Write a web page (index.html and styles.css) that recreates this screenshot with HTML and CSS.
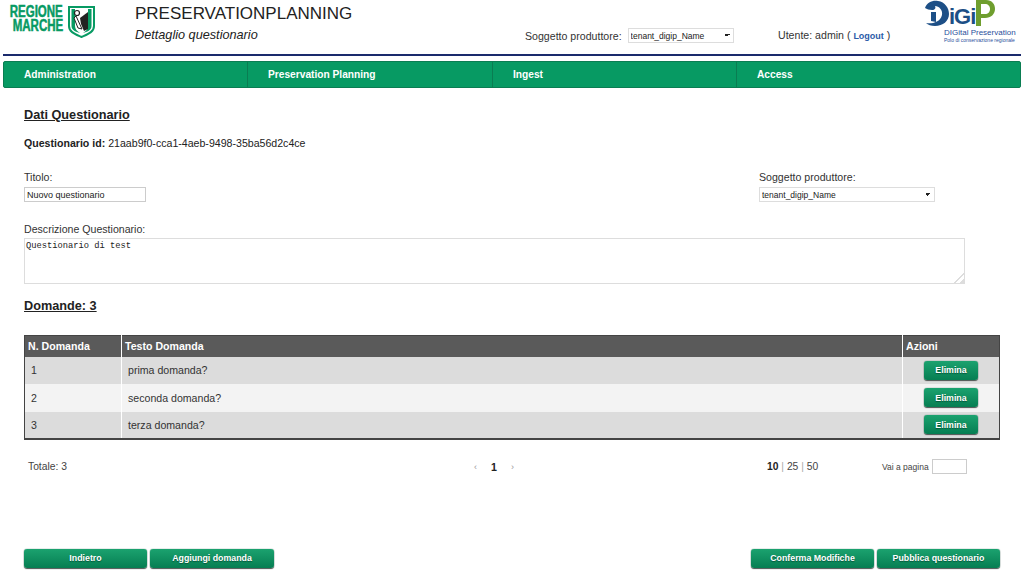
FILE: index.html
```html
<!DOCTYPE html>
<html lang="it">
<head>
<meta charset="utf-8">
<title>Dettaglio questionario</title>
<link rel="stylesheet" href="styles.css">
</head>
<body>
<header class="header">
  <div class="logo-rm">
    <div class="logo-rm-text"><span class="logo-line">REGIONE</span><span class="logo-line">MARCHE</span></div>
    <svg class="logo-rm-shield" width="27" height="32" viewBox="0 0 27 32">
      <path d="M1 1H26V20C26 26 20 28 13.500 31C7 28 1 26 1 20Z" fill="#fff" stroke="#079a63" stroke-width="2"/>
      <path d="M3.500 3H7V20C7 23 9 25 12 27C8 26 3.500 24 3.500 20Z" fill="#079a63"/>
      <path d="M23.500 3H20V20C20 23 18 25 15 27C19 26 23.500 24 23.500 20Z" fill="#079a63"/>
      <path d="M12 12L20 6V23L16 25L13 18Z" fill="#222"/>
      <circle cx="9" cy="7" r="2.500" fill="none" stroke="#222" stroke-width="1.200"/>
      <path d="M8 10L14 23L10 22L6 12Z" fill="#fff" stroke="#222"/>
    </svg>
  </div>
  <div class="app-title">
    <div class="app-name">PRESERVATIONPLANNING</div>
    <div class="app-sub">Dettaglio questionario</div>
  </div>
  <div class="tenant">
    <label class="top-label">Soggetto produttore:</label>
    <select class="select select-top"><option>tenant_digip_Name</option></select>
  </div>
  <div class="user top-label">Utente: admin ( <a class="logout" href="#">Logout</a> )</div>
  <div class="logo-digip">
    <div class="digip-mark">
      <svg class="digip-swirl" width="24" height="27" viewBox="0 0 24 27">
        <path d="M0 8C2 2 8 0 13 1C20 2 24 8 24 14C24 21 18 26 10 26C6 26 3 25 1 23C6 24 15 23 17 15C18 10 14 6 10 6C11 8 10 10 7 10C4 10 2 9 0 8Z" fill="#1d4f86"/>
        <path d="M6 12H11V22L6 21Z" fill="#1d4f86"/>
      </svg>
      <span class="digip-letters">iGi</span>
      <svg class="digip-p" width="22" height="27" viewBox="0 0 22 27">
        <path d="M2 0H12C18 0 21 4 21 9C21 14 17 18 11 18H7V26H2Z" fill="#6f9e2e"/>
        <path d="M7 4H11C14 4 16 6 16 9C16 12 14 14 11 14H7Z" fill="#fff"/>
      </svg>
    </div>
    <div class="digip-name">DIGital Preservation</div>
    <div class="digip-tag">Polo di conservazione regionale</div>
  </div>
</header>

<nav class="nav">
  <a class="nav-item" href="#">Administration</a>
  <a class="nav-item" href="#">Preservation Planning</a>
  <a class="nav-item" href="#">Ingest</a>
  <a class="nav-item" href="#">Access</a>
</nav>

<main class="content">
  <h2 class="section-title first">Dati Questionario</h2>
  <p class="id-line"><b>Questionario id:</b> 21aab9f0-cca1-4aeb-9498-35ba56d2c4ce</p>

  <div class="form-row">
    <div class="field">
      <label class="label">Titolo:</label>
      <input class="input input-title" type="text" value="Nuovo questionario">
    </div>
    <div class="field">
      <label class="label">Soggetto produttore:</label>
      <select class="select select-form"><option>tenant_digip_Name</option></select>
    </div>
  </div>

  <div class="field desc">
    <label class="label">Descrizione Questionario:</label>
    <textarea class="textarea">Questionario di test</textarea>
  </div>

  <h2 class="section-title second">Domande: 3</h2>

  <table class="table">
    <thead>
      <tr><th class="col-n">N. Domanda</th><th>Testo Domanda</th><th class="col-a">Azioni</th></tr>
    </thead>
    <tbody>
      <tr class="odd"><td class="num">1</td><td class="txt">prima domanda?</td><td class="act"><button class="btn btn-small">Elimina</button></td></tr>
      <tr class="even"><td class="num">2</td><td class="txt">seconda domanda?</td><td class="act"><button class="btn btn-small">Elimina</button></td></tr>
      <tr class="odd"><td class="num">3</td><td class="txt">terza domanda?</td><td class="act"><button class="btn btn-small">Elimina</button></td></tr>
    </tbody>
  </table>

  <div class="pager">
    <div>Totale: 3</div>
    <div class="pages"><span class="arrow">‹</span><b class="current">1</b><span class="arrow">›</span></div>
    <div class="sizes"><b>10</b> <i>|</i> 25 <i>|</i> 50</div>
    <div class="goto"><span>Vai a pagina</span><input class="input input-page" type="text"></div>
  </div>

  <div class="actions">
    <div class="group">
      <button class="btn btn-large">Indietro</button>
      <button class="btn btn-large btn-wide">Aggiungi domanda</button>
    </div>
    <div class="group">
      <button class="btn btn-large">Conferma Modifiche</button>
      <button class="btn btn-large">Pubblica questionario</button>
    </div>
  </div>
</main>
</body>
</html>
```
FILE: styles.css
```css
* { box-sizing: border-box; }
html, body { margin: 0; padding: 0; }
body {
  width: 1024px;
  height: 574px;
  overflow: hidden;
  background: #fff;
  color: #222;
  font-family: "Liberation Sans", Arial, sans-serif;
  font-size: 10.600px;
}

/* header */
.header {
  height: 56px;
  margin: 0 3px;
  border-bottom: 2px solid #1a2a6c;
  display: flex;
  align-items: flex-start;
}
.logo-rm {
  width: 132px;
  padding: 5px 0 0 7px;
  display: flex;
  gap: 5px;
}
.logo-rm-text {
  width: 53px;
  display: flex;
  flex-direction: column;
  align-items: flex-end;
}
.logo-line {
  display: block;
  color: #079a63;
  font-weight: 700;
  font-size: 16px;
  line-height: 14px;
  white-space: nowrap;
  transform: scaleX(0.72);
  transform-origin: right center;
  -webkit-text-stroke: 0.500px #079a63;
}
.logo-rm-shield { flex: none; margin-top: 1px; }
.app-title { width: 390px; }
.app-name {
  font-size: 17px;
  line-height: 20px;
  margin-top: 4px;
  color: #222;
}
.app-sub {
  font-size: 12.700px;
  font-style: italic;
  line-height: 14px;
  margin-top: 4px;
}
.top-label { font-size: 10.600px; color: #333; }
.tenant {
  width: 250px;
  margin-top: 28px;
  display: flex;
  align-items: center;
  gap: 6px;
}
.user {
  margin-top: 28px;
  margin-left: 3px;
  width: 143px;
  line-height: 14px;
}
.logout {
  color: #2b5ca8;
  font-weight: 700;
  font-size: 9px;
  text-decoration: none;
}
.logo-digip { width: 96px; }
.digip-mark {
  display: flex;
  align-items: flex-start;
  height: 28px;
  margin-left: 4px;
}
.digip-letters {
  color: #1d4f86;
  font-weight: 700;
  font-size: 22px;
  line-height: 30px;
  letter-spacing: -1px;
  margin-top: 2px;
  height: 26px;
  overflow: visible;
}
.digip-p { margin-left: -1px; }
.digip-name {
  color: #2a4f9c;
  font-size: 8px;
  line-height: 9px;
  margin-top: 0;
  margin-left: 23px;
  white-space: nowrap;
}
.digip-tag {
  color: #2a4f9c;
  font-size: 5px;
  line-height: 6px;
  margin-left: 23px;
  white-space: nowrap;
}

/* nav */
.nav {
  display: grid;
  grid-template-columns: 243px 245px 244px 1fr;
  height: 27px;
  margin: 5px 3px 0;
  background: #079a63;
  border: 1px solid #0a7d52;
  border-radius: 2px;
}
.nav-item {
  color: #fff;
  font-weight: 700;
  font-size: 10.200px;
  line-height: 25px;
  padding-left: 20px;
  text-decoration: none;
  border-left: 1px solid #0a7d52;
}
.nav-item:first-child { border-left: 0; }

/* content */
.content {
  padding: 0 24px;
}
.section-title {
  margin: 0;
  font-size: 12.700px;
  line-height: 16px;
  font-weight: 700;
  text-decoration: underline;
  color: #222;
}
.section-title.first { margin-top: 19px; }
.section-title.second { margin-top: 14px; }
.id-line {
  margin: 12px 0 0;
  line-height: 16px;
}
.form-row {
  display: flex;
  justify-content: space-between;
  margin-top: 19px;
  padding-right: 65px;
}
.field { display: flex; flex-direction: column; }
.label { font-size: 10.600px; line-height: 14px; color: #333; margin-bottom: 3px; }
.input {
  height: 15px;
  border: 1px solid #ccc;
  padding: 0 2px;
  font-family: "Liberation Sans", Arial, sans-serif;
  font-size: 9px;
  color: #222;
  background: #fff;
  outline: 0;
}
.input-title { width: 122px; }
.select {
  appearance: none;
  height: 15px;
  padding: 0 12px 0 2px;
  border: 1px solid #ddd;
  border-radius: 0;
  font-family: "Liberation Sans", Arial, sans-serif;
  font-size: 8.500px;
  color: #222;
  background-color: #fff;
  background-image:
    linear-gradient(45deg, transparent 50%, #222 50%),
    linear-gradient(-45deg, transparent 50%, #222 50%);
  background-size: 3px 3px, 3px 3px;
  background-repeat: no-repeat;
  background-position: right 6px top 5px, right 3px top 5px;
}
.select-top { width: 106px; }
.select-form { width: 176px; }
.desc { margin-top: 20px; }
.textarea {
  display: block;
  width: 941px;
  height: 46px;
  margin-top: -1px;
  border: 1px solid #ddd;
  padding: 2px 1px;
  font-family: "Liberation Mono", monospace;
  font-size: 8.750px;
  color: #222;
  outline: 0;
}
.textarea::-webkit-resizer {
  background: linear-gradient(135deg, transparent 65%, #ddd 65%, #ddd 72%, transparent 72%, transparent 85%, #ddd 85%);
}

/* table */
.table {
  width: 976px;
  margin-top: 21px;
  border-collapse: collapse;
  table-layout: fixed;
  border: 1px solid #444;
  border-bottom-width: 2px;
}
.table th {
  height: 21px;
  padding: 0 3px;
  background: #5a5a5a;
  color: #fff;
  font-size: 10.600px;
  font-weight: 700;
  text-align: left;
  border-left: 1px solid #fff;
}
.table th:first-child { border-left: 0; }
.table td {
  padding: 0;
  font-size: 10.600px;
  color: #333;
  border-left: 1px solid #fff;
}
.table td:first-child { border-left: 0; }
.col-n { width: 97px; }
.col-a { width: 97px; }
.odd td { background: #dcdcdc; }
.even td { background: #f3f3f3; }
.odd { height: 27px; }
.even { height: 28px; }
.table .num { padding-left: 6px; }
.table .txt { padding-left: 6px; }
.table .act { text-align: center; padding-left: 0; }

/* buttons */
.btn {
  border: 0;
  border-radius: 3px;
  background: linear-gradient(#1ba26f, #067e52);
  box-shadow: 0 0 1px #064e33, 0 1px 1px #555;
  color: #fff;
  font-family: "Liberation Sans", Arial, sans-serif;
  font-size: 8.800px;
  font-weight: 700;
  text-shadow: 0 1px 1px #04563a;
  padding: 0;
}
.btn-small { width: 54px; height: 19px; display: block; margin: 0 auto; }
.btn-large { width: 123px; height: 19px; }
.btn-wide { width: 124px; }

/* pager */
.pager {
  display: grid;
  grid-template-columns: 444px 295px 115px 1fr;
  align-items: center;
  height: 16px;
  margin-top: 19px;
  padding-left: 4px;
  color: #444;
  font-size: 10.300px;
}
.pages { display: flex; align-items: center; gap: 14px; padding-left: 2px; color: #222; }
.current { font-size: 10.600px; color: #222; }
.arrow { color: #999; font-size: 9px; }
.sizes i { color: #aaa; font-style: normal; }
.sizes b { color: #222; }
.goto { display: flex; align-items: center; gap: 3px; font-size: 8.500px; }
.input-page { width: 35px; }

/* actions */
.actions {
  display: flex;
  justify-content: space-between;
  margin-top: 74px;
}
.group { display: flex; gap: 3px; }
```
